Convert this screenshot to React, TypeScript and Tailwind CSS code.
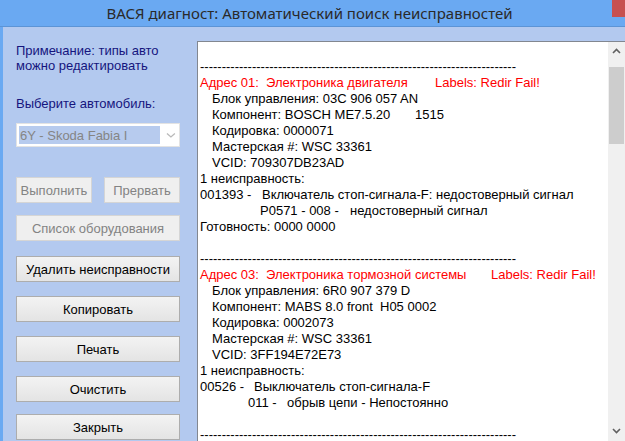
import React from 'react';

const dashes = '-'.repeat(73);

function Btn({ label, disabled, className = '' }: { label: string; disabled?: boolean; className?: string }) {
  return (
    <div
      className={
        'h-[26px] flex items-center justify-center border text-[13px] ' +
        (disabled
          ? 'border-[#d5d5d5] bg-[#efefef] text-[#838383] '
          : 'border-[#adadad] bg-gradient-to-b from-[#f3f3f3] to-[#e4e4e4] text-black ') +
        className
      }
    >
      {label}
    </div>
  );
}

function Dash() {
  return <div className="h-[16px] whitespace-pre">{dashes}</div>;
}

function Tab({ w, children }: { w: string; children: React.ReactNode }) {
  return <span className={'inline-block whitespace-pre ' + w}>{children}</span>;
}

export default function App() {
  return (
    <div className="w-[625px] h-[441px] overflow-hidden flex flex-col bg-[#6aa9f2]" style={{ fontFamily: '"Liberation Sans", Arial, sans-serif' }}>
      {/* title bar */}
      <div className="relative h-[27px] shrink-0 flex items-center justify-center border-b border-[#5c94d6]">
        <span className="text-[15px] text-[#2a2a2a] ml-[-6px]" style={{ fontFamily: '"Noto Sans", sans-serif' }}>
          ВАСЯ диагност: Автоматический поиск неисправностей
        </span>
        <div className="absolute right-0 top-0 w-[13px] h-[17px] bg-[#c75050]" />
      </div>

      <div className="flex flex-1 min-h-0 ml-[3px] bg-[#b3c9ef]">
        {/* left panel */}
        <div className="w-[194px] shrink-0 pl-[13px] pr-[14px] pt-[16px] text-[13px] leading-[15px]">
          <div className="text-[#15157e]">
            <div>Примечание: типы авто</div>
            <div>можно редактировать</div>
            <div className="mt-[23px]">Выберите автомобиль:</div>
          </div>
          <div className="mt-[12px] h-[24px] w-[164px] bg-white border border-[#e3e3e3] p-[2px] flex items-center">
            <div className="h-full w-[143px] bg-[#b7cbee] text-[#858585] text-[13px] flex items-center pl-[1px]">6Y - Skoda Fabia I</div>
            <svg width="12" height="12" viewBox="0 0 12 12" className="ml-[5px]">
              <path d="M2 4.5 L6 8 L10 4.5" fill="none" stroke="#b9b9b9" strokeWidth="1.3" />
            </svg>
          </div>
          <div className="mt-[30px] flex gap-[12px]">
            <Btn label="Выполнить" disabled className="w-[76px]" />
            <Btn label="Прервать" disabled className="w-[76px]" />
          </div>
          <Btn label="Список оборудования" disabled className="mt-[12px] w-[164px]" />
          <Btn label="Удалить неисправности" className="mt-[15px] w-[164px]" />
          <Btn label="Копировать" className="mt-[14px] w-[164px]" />
          <Btn label="Печать" className="mt-[14px] w-[164px]" />
          <Btn label="Очистить" className="mt-[14px] w-[164px]" />
          <Btn label="Закрыть" className="mt-[12px] w-[164px]" />
        </div>

        {/* report text area */}
        <div className="flex-1 mt-[14px] flex bg-white border-l border-t border-[#828790] min-w-0">
          <div className="flex-1 pl-[2px] pt-[1px] text-[13px] leading-[16px] text-black whitespace-pre overflow-hidden">
            <div className="h-[16px]" />
            <Dash />
            <div className="text-[#ff0000]">
              <Tab w="w-[235px]">Адрес 01:  Электроника двигателя</Tab>Labels: Redir Fail!
            </div>
            <div className="pl-[12px]">Блок управления: 03C 906 057 AN</div>
            <div className="pl-[12px]">
              <Tab w="w-[203px]">Компонент: BOSCH ME7.5.20</Tab>1515
            </div>
            <div className="pl-[12px]">Кодировка: 0000071</div>
            <div className="pl-[12px]">Мастерская #: WSC 33361</div>
            <div className="pl-[12px]">VCID: 709307DB23AD</div>
            <div>1 неисправность:</div>
            <div>
              <Tab w="w-[62px]">001393 -</Tab>Включатель стоп-сигнала-F: недостоверный сигнал
            </div>
            <div className="pl-[60px]">
              <Tab w="w-[90px]">P0571 - 008 -</Tab>недостоверный сигнал
            </div>
            <div>Готовность: 0000 0000</div>
            <div className="h-[16px]" />
            <Dash />
            <div className="text-[#ff0000]">
              <Tab w="w-[291px]">Адрес 03:  Электроника тормозной системы</Tab>Labels: Redir Fail!
            </div>
            <div className="pl-[12px]">Блок управления: 6R0 907 379 D</div>
            <div className="pl-[12px]">
              <Tab w="w-[168px]">Компонент: MABS 8.0 front</Tab>H05 0002
            </div>
            <div className="pl-[12px]">Кодировка: 0002073</div>
            <div className="pl-[12px]">Мастерская #: WSC 33361</div>
            <div className="pl-[12px]">VCID: 3FF194E72E73</div>
            <div>1 неисправность:</div>
            <div>
              <Tab w="w-[54px]">00526 -</Tab>Выключатель стоп-сигнала-F
            </div>
            <div className="pl-[48px]">
              <Tab w="w-[39px]">011 -</Tab>обрыв цепи - Непостоянно
            </div>
            <div className="h-[16px]" />
            <Dash />
          </div>

          {/* scrollbar */}
          <div className="w-[17px] shrink-0 bg-[#f0f0f0] flex flex-col items-center">
            <div className="h-[18px] flex items-center justify-center">
              <svg width="9" height="6" viewBox="0 0 9 6">
                <path d="M1 5 L4.5 1.5 L8 5" fill="none" stroke="#606060" strokeWidth="1.6" />
              </svg>
            </div>
            <div className="mt-[7px] w-[15px] h-[77px] bg-[#cdcdcd]" />
            <div className="flex-1" />
            <div className="h-[18px] flex items-center justify-center mb-[1px]">
              <svg width="9" height="6" viewBox="0 0 9 6">
                <path d="M1 1 L4.5 4.5 L8 1" fill="none" stroke="#606060" strokeWidth="1.6" />
              </svg>
            </div>
          </div>
        </div>
      </div>
    </div>
  );
}
